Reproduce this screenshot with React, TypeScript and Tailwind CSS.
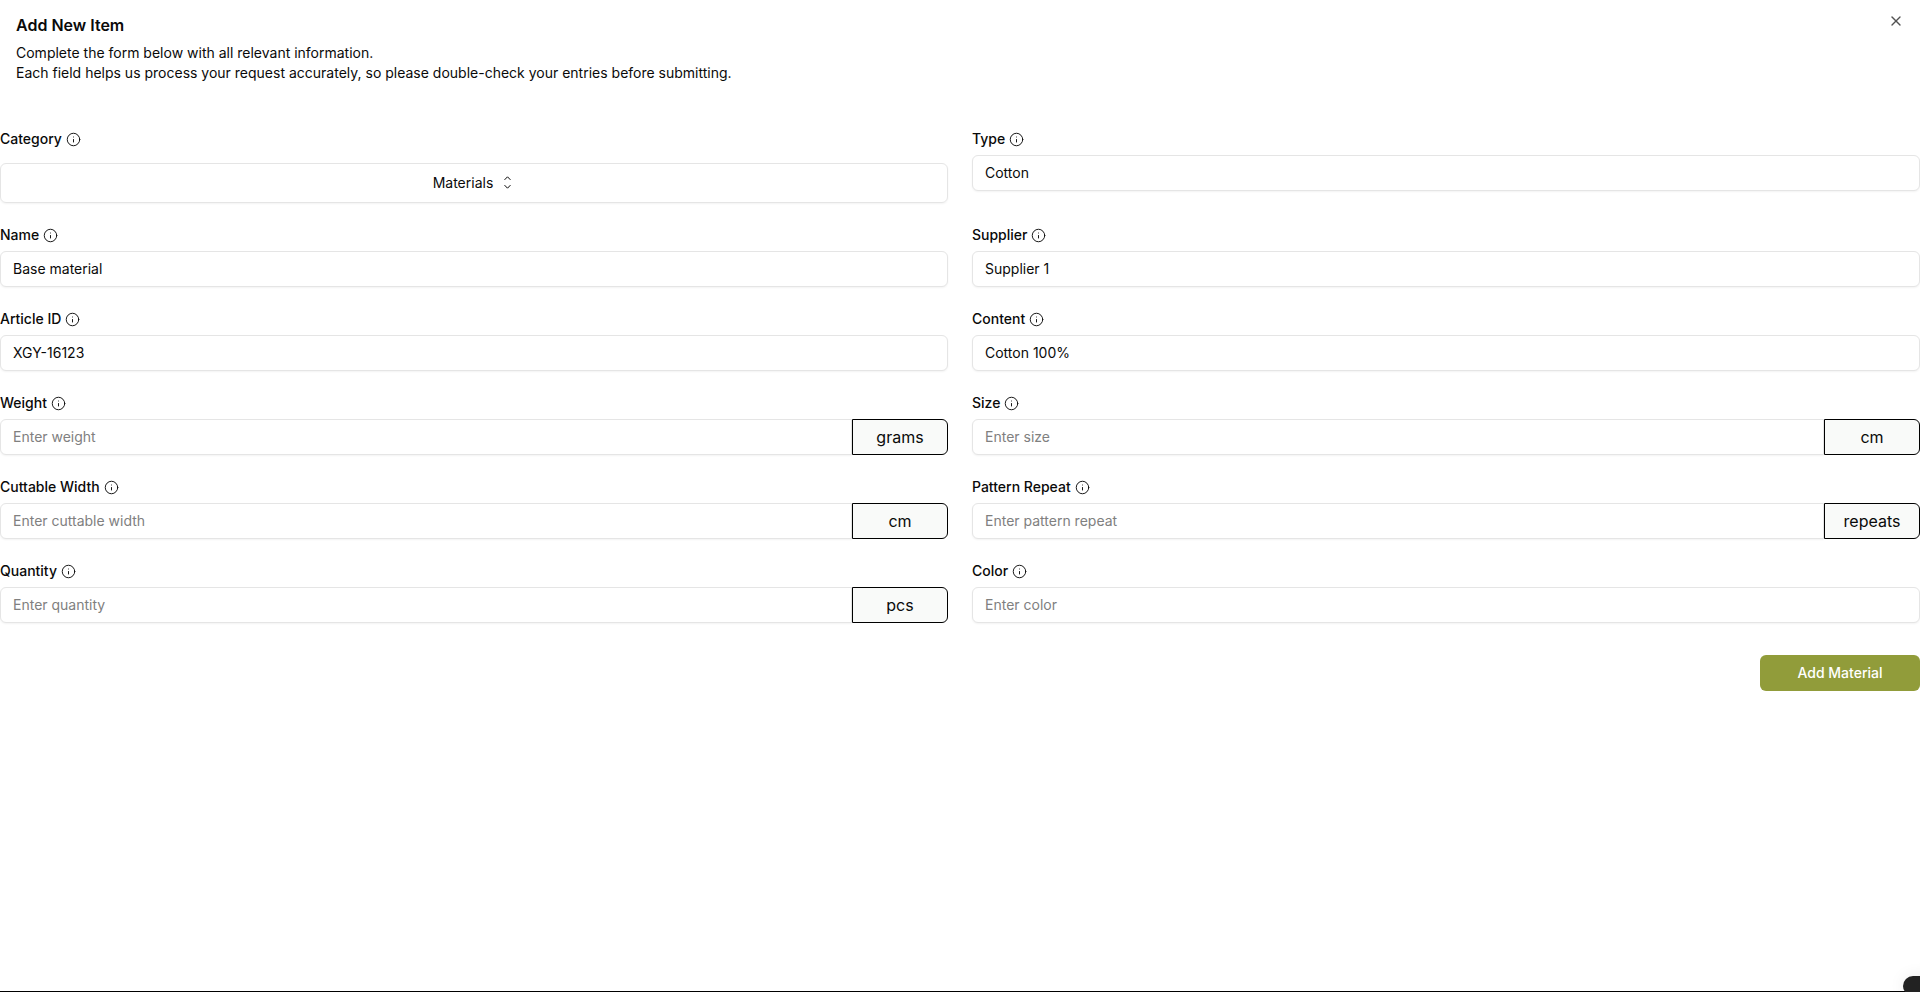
import { Info, X } from "lucide-react";

function Label({ children }: { children: string }) {
  return (
    <div className="flex items-center gap-[4px] h-[20px] text-[14px] leading-[20px] font-medium text-[#0a0a0a]">
      <span>{children}</span>
      <Info className="w-[15px] h-[15px]" strokeWidth={1.5} />
    </div>
  );
}

function Field({ label, value, placeholder, unit }: { label: string; value?: string; placeholder?: string; unit?: string }) {
  return (
    <div className="flex flex-col gap-[6px]">
      <Label>{label}</Label>
      <div className="flex h-[36px]">
        <div className={`flex-1 flex items-center px-[12px] pb-[1px] text-[14px] border border-[#e5e5e5] shadow-xs bg-white ${unit ? "rounded-l-[6px]" : "rounded-[6px]"} ${value ? "text-[#0a0a0a]" : "text-[#808080]"}`}>
          {value ?? placeholder}
        </div>
        {unit && (
          <div className="w-[96px] flex items-center justify-center text-[16px] text-[#0a0a0a] bg-[#f9faf9] border border-black rounded-r-[6px]">
            {unit}
          </div>
        )}
      </div>
    </div>
  );
}

export default function App() {
  return (
    <div className="relative w-[1920px] h-[992px] overflow-hidden bg-white font-['Inter',sans-serif]">
      <div className="pl-[16px] pt-[16px] h-[129px]">
        <h2 className="text-[16px] leading-[18px] font-semibold text-[#0a0a0a]">Add New Item</h2>
        <p className="mt-[9px] text-[14px] leading-[20px] text-[#0a0a0a]">
          Complete the form below with all relevant information.
          <br />
          Each field helps us process your request accurately, so please double-check your entries before submitting.
        </p>
      </div>
      <X className="absolute right-[16px] top-[13px] w-[16px] h-[16px] text-[#0a0a0a] opacity-70" />
      <div className="grid grid-cols-2 gap-x-[24px] gap-y-[22px]">
        <div className="flex flex-col gap-[14px]">
          <Label>Category</Label>
          <div className="h-[40px] flex items-center justify-center gap-[7px] pb-[1px] text-[14px] font-normal text-[#0a0a0a] border border-[#e5e5e5] rounded-[6px] shadow-xs">
            Materials
            <svg className="w-[15px] h-[15px]" viewBox="0 0 15 15" fill="none" stroke="currentColor" strokeWidth="1" strokeLinecap="round" strokeLinejoin="round">
              <path d="M4.8 4.6 7.5 1.8 10.2 4.6" />
              <path d="M4.8 10.4 7.5 13.2 10.2 10.4" />
            </svg>
          </div>
        </div>
        <Field label="Type" value="Cotton" />
        <Field label="Name" value="Base material" />
        <Field label="Supplier" value="Supplier 1" />
        <Field label="Article ID" value="XGY-16123" />
        <Field label="Content" value="Cotton 100%" />
        <Field label="Weight" placeholder="Enter weight" unit="grams" />
        <Field label="Size" placeholder="Enter size" unit="cm" />
        <Field label="Cuttable Width" placeholder="Enter cuttable width" unit="cm" />
        <Field label="Pattern Repeat" placeholder="Enter pattern repeat" unit="repeats" />
        <Field label="Quantity" placeholder="Enter quantity" unit="pcs" />
        <Field label="Color" placeholder="Enter color" />
      </div>
      <div className="flex justify-end mt-[32px]">
        <button className="w-[160px] h-[36px] pb-[1px] rounded-[6px] bg-[#919c3a] text-white text-[14px] font-medium">Add Material</button>
      </div>
      <div className="absolute left-0 right-0 bottom-0 h-[1.5px] bg-black" />
      <div className="absolute left-[1903px] top-[976px] w-[40px] h-[20px] rounded-[10px] bg-[#222222] shadow-[0_0_16px_rgba(0,0,0,0.08)]" />
    </div>
  );
}
